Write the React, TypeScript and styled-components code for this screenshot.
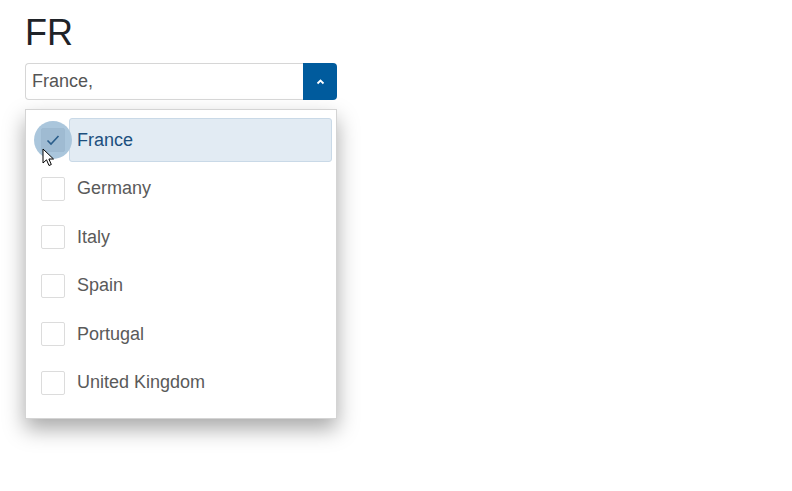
import React from "react";
import styled, { createGlobalStyle } from "styled-components";

const Global = createGlobalStyle`
  html, body { margin: 0; padding: 0; background: #fff; }
  body { font-family: "Liberation Sans", Arial, sans-serif; }
`;

const Page = styled.div`
  padding: 12px 0 0 25px;
  width: 312px;
  min-height: 491px;
  box-sizing: content-box;
  position: relative;
`;

const Title = styled.h1`
  margin: 0 0 9px 0;
  font-size: 36px;
  font-weight: 400;
  line-height: 42px;
  color: #1f2328;
`;

const Combo = styled.div`
  display: flex;
  height: 37px;
  box-sizing: border-box;
`;

const Input = styled.div`
  flex: 1;
  border: 1px solid #d6d6d6;
  border-right: none;
  border-radius: 4px 0 0 4px;
  padding: 0 6px;
  display: flex;
  align-items: center;
  font-size: 18px;
  color: #555;
`;

const Toggle = styled.button`
  width: 34px;
  border: none;
  border-radius: 0 4px 4px 0;
  background: #005b9d;
  display: flex;
  align-items: center;
  justify-content: center;
  padding: 0;
`;

const Menu = styled.ul`
  list-style: none;
  margin: 9px 0 0 0;
  padding: 8px 4px 13px 0;
  border: 1px solid #d4d4d4;
  background: #fff;
  box-shadow: 0 10px 20px rgba(0, 0, 0, 0.34);
  display: flex;
  flex-direction: column;
  gap: 4.6px;
`;

const Row = styled.li`
  display: flex;
  align-items: center;
  height: 44px;
`;

const BoxCell = styled.div`
  width: 43px;
  display: flex;
  justify-content: flex-start;
  padding-left: 15px;
  box-sizing: border-box;
  position: relative;
`;

const Check = styled.span<{ $on?: boolean }>`
  width: 24px;
  height: 24px;
  box-sizing: border-box;
  border: 1px solid ${(p) => (p.$on ? "#9ebad1" : "#dcdcdc")};
  border-radius: 2px;
  background: ${(p) => (p.$on ? "#9fbbd2" : "#fff")};
  display: flex;
  align-items: center;
  justify-content: center;
  position: relative;
  z-index: 1;
`;

const Halo = styled.span`
  position: absolute;
  left: 8px;
  top: 50%;
  width: 38px;
  height: 38px;
  margin-top: -19px;
  border-radius: 50%;
  background: #aac6dc;
  z-index: 0;
`;

const Label = styled.div<{ $on?: boolean }>`
  flex: 1;
  height: 100%;
  box-sizing: border-box;
  display: flex;
  align-items: center;
  padding-left: 7px;
  font-size: 18px;
  border-radius: 3px;
  color: ${(p) => (p.$on ? "#1c4f7e" : "#5a5a5a")};
  background: ${(p) => (p.$on ? "#e2ebf3" : "transparent")};
  border: 1px solid ${(p) => (p.$on ? "#c9d9e7" : "transparent")};
`;

const Cursor = styled.svg`
  position: absolute;
  left: 16px;
  top: 20px;
  z-index: 3;
`;

const countries = ["France", "Germany", "Italy", "Spain", "Portugal", "United Kingdom"];

export default function App() {
  return (
    <>
      <Global />
      <Page>
        <Title>FR</Title>
        <Combo>
          <Input>France,</Input>
          <Toggle aria-label="toggle">
            <svg width="9" height="6" viewBox="0 0 9 6">
              <path d="M1.5 4.5 L4.5 1.5 L7.5 4.5" stroke="#fff" strokeWidth="1.8" fill="none" />
            </svg>
          </Toggle>
        </Combo>
        <Menu>
          {countries.map((c, i) => (
            <Row key={c}>
              <BoxCell>
                {i === 0 && <Halo />}
                <Check $on={i === 0}>
                  {i === 0 && (
                    <svg width="14" height="12" viewBox="0 0 14 12">
                      <path d="M1.5 6.5 L5 10 L12.5 2" stroke="#2a5d8a" strokeWidth="1.6" fill="none" />
                    </svg>
                  )}
                </Check>
                {i === 0 && (
                  <Cursor width="14" height="20" viewBox="0 0 14 20">
                    <path
                      d="M1 1 L1 15 L4.5 11.8 L7 17.5 L9.3 16.5 L6.9 11 L11.5 11 Z"
                      fill="#fff"
                      stroke="#000"
                      strokeWidth="1"
                      strokeLinejoin="round"
                    />
                  </Cursor>
                )}
              </BoxCell>
              <Label $on={i === 0}>{c}</Label>
            </Row>
          ))}
        </Menu>
      </Page>
    </>
  );
}
